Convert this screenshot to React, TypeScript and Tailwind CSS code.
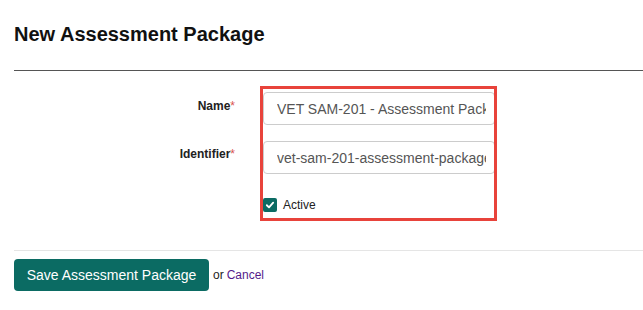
import React from 'react';

const fields = [
  { label: 'Name', value: 'VET SAM-201 - Assessment Package' },
  { label: 'Identifier', value: 'vet-sam-201-assessment-package' },
];

const App: React.FC = () => {
  return (
    <div className="h-[310px] w-[643px] overflow-hidden bg-white pl-[14px] font-['Liberation_Sans',Arial,sans-serif] text-[#222]">
      <h2 className="pt-[22px] text-[20px] font-bold leading-6 text-[#111]">New Assessment Package</h2>
      <div className="mt-[24px] h-px bg-[#555]" />

      <div className="mt-[21px] flex">
        <div className="flex w-[221px] flex-col gap-[16px]">
          {fields.map(f => (
            <div key={f.label} className="h-[32px] pt-[6px] text-right text-[12px] font-bold leading-4">
              {f.label}
              <span className="font-normal text-[#d9534f]">*</span>
            </div>
          ))}
        </div>

        <div className="relative ml-[28px] flex w-[232px] flex-col">
          <div className="flex flex-col gap-[16px]">
            {fields.map(f => (
              <input
                key={f.label}
                readOnly
                defaultValue={f.value}
                className="h-[33px] w-[232px] rounded-[4px] border border-[#ccc] pl-[13px] pr-[8px] text-[14px] text-[#555] outline-none"
              />
            ))}
          </div>
          <label className="mt-[24px] flex h-[14px] items-center gap-[6px] text-[12px] leading-4">
            <span className="flex h-[14px] w-[14px] items-center justify-center rounded-[2px] bg-[#0b6b63]">
              <svg viewBox="0 0 12 12" className="h-[10px] w-[10px]" fill="none" stroke="white" strokeWidth="2.2" strokeLinecap="round" strokeLinejoin="round">
                <path d="M2.2 6.3 4.8 8.8 9.8 3.2" />
              </svg>
            </span>
            Active
          </label>
          <div className="pointer-events-none absolute -left-[3px] -top-[6px] h-[135px] w-[237px] border-[3px] border-[#e8433b]" />
        </div>
      </div>

      <div className="mt-[38px] h-px bg-[#e5e5e5]" />

      <div className="mt-[8px] flex items-center text-[12px]">
        <button className="h-[32px] w-[195px] rounded-[4px] bg-[#0b6b63] text-[14px] text-white">
          Save Assessment Package
        </button>
        <span className="ml-[4px]">or</span>
        <a href="#" className="ml-[3px] text-[#551a8b]">Cancel</a>
      </div>
    </div>
  );
};

export default App;
